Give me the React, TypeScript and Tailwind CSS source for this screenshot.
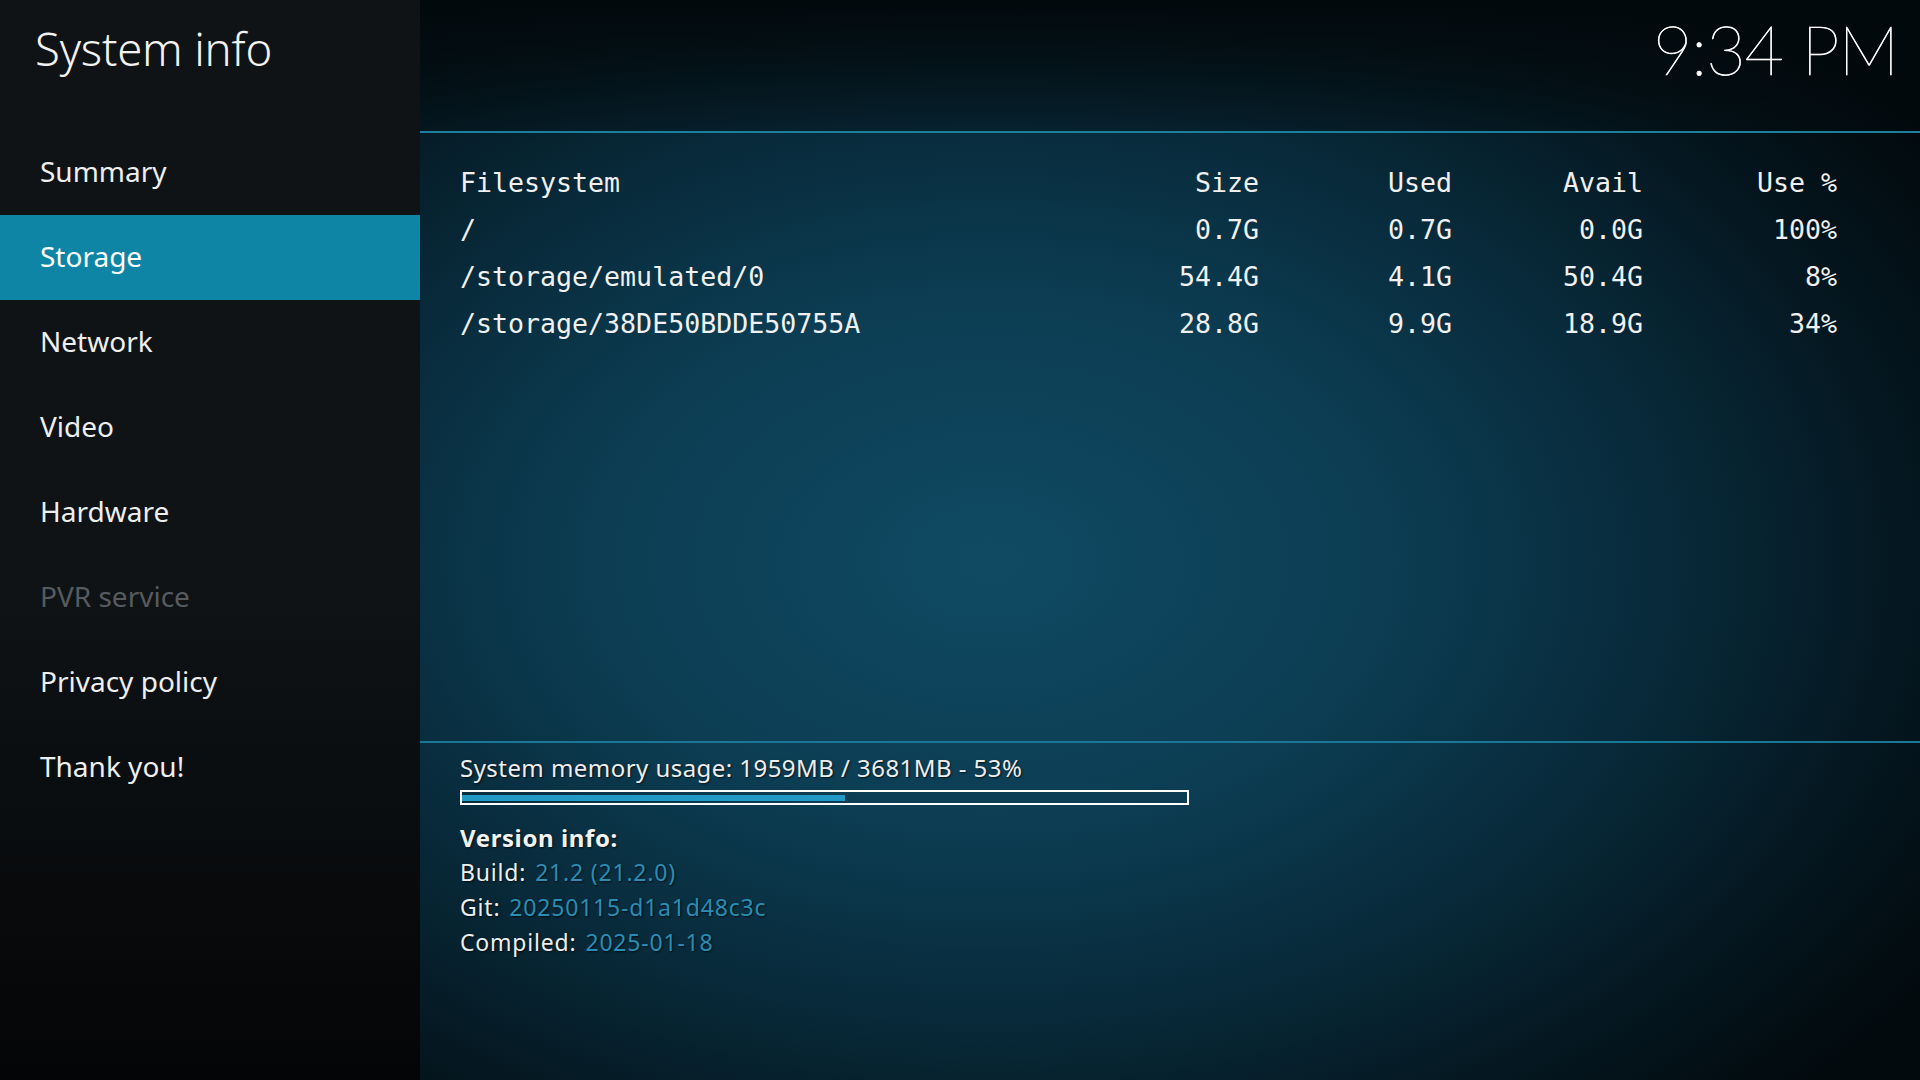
import React from "react";

const menu = [
  { label: "Summary" },
  { label: "Storage", active: true },
  { label: "Network" },
  { label: "Video" },
  { label: "Hardware" },
  { label: "PVR service", disabled: true },
  { label: "Privacy policy" },
  { label: "Thank you!" },
];

const rows = [
  ["Filesystem", "Size", "Used", "Avail", "Use %"],
  ["/", "0.7G", "0.7G", "0.0G", "100%"],
  ["/storage/emulated/0", "54.4G", "4.1G", "50.4G", "8%"],
  ["/storage/38DE50BDDE50755A", "28.8G", "9.9G", "18.9G", "34%"],
];

export default function App() {
  return (
    <div className="flex h-[1080px] w-[1920px] overflow-hidden bg-black text-white [font-family:'Noto_Sans','Open_Sans',sans-serif]">
      {/* Sidebar */}
      <aside className="flex w-[420px] shrink-0 flex-col bg-[linear-gradient(180deg,#101316_0%,#0f1316_55%,#040506_100%)]">
        <div className="flex h-[130px] items-start pl-[35px] pt-[17px]">
          <h1 className="text-[45.5px] font-light leading-[62px] tracking-[-0.2px] text-[#f2f2f2]">System info</h1>
        </div>
        <nav className="flex flex-col">
          {menu.map((m) => (
            <div
              key={m.label}
              className={
                "flex h-[85px] items-center pb-[3px] pl-[40px] text-[28px] " +
                (m.active
                  ? "bg-[#0f85a6] text-white"
                  : m.disabled
                  ? "text-[#565b5f]"
                  : "text-[#eeeeee]")
              }
            >
              {m.label}
            </div>
          ))}
        </nav>
      </aside>

      {/* Main */}
      <main className="flex flex-1 flex-col bg-[radial-gradient(ellipse_75%_70%_at_38%_52%,#0f4a63_0%,#0c3d53_35%,#082a3a_60%,#04141c_85%,#020a0e_100%)]">
        <header className="flex h-[131px] shrink-0 items-start justify-end bg-[linear-gradient(180deg,#02090c_0%,rgba(2,9,12,0.3)_100%)] pr-[22px] pt-[6px]">
          <div className="text-[68px] font-thin leading-[86px] tracking-[-1px] text-white [-webkit-text-stroke:0.7px_#ffffff] [font-family:'Lato','Roboto',sans-serif]">
            9:34 PM
          </div>
        </header>
        <div className="h-[2px] bg-[#1b7f9d]" />

        <section className="flex-1 pl-[40px] pt-[26px] [font-family:'DejaVu_Sans_Mono','Liberation_Mono',monospace] text-[26.6px] text-[#f0f0f0]">
          {rows.map((r, i) => (
            <div key={i} className="grid h-[47.2px] grid-cols-[606px_193px_193px_191px_194px] items-center">
              <div>{r[0]}</div>
              <div className="text-right">{r[1]}</div>
              <div className="text-right">{r[2]}</div>
              <div className="text-right">{r[3]}</div>
              <div className="text-right">{r[4]}</div>
            </div>
          ))}
        </section>

        <div className="h-[2px] bg-[#1a7896]" />
        <section className="h-[337px] shrink-0 pl-[40px] pt-[9px] [text-shadow:1px_1px_2px_rgba(0,0,0,0.7)]">
          <div className="text-[24px] leading-[32px] tracking-[0.45px] text-[#eeeeee]">System memory usage: 1959MB / 3681MB - 53%</div>
          <div className="mt-[6px] flex h-[15px] w-[729px] items-center border-2 border-white px-0">
            <div className="h-[6px] w-[383px] bg-[#2199c4]" />
          </div>
          <div className="mt-[15px] text-[24px] font-bold leading-[35px] tracking-[0.6px] text-[#f2f2f2]">Version info:</div>
          <div className="text-[23px] leading-[35px] tracking-[0.8px] text-[#eeeeee]">
            <div>
              Build:<span className="ml-[9px] text-[#2b8db3]">21.2 (21.2.0)</span>
            </div>
            <div>
              Git:<span className="ml-[9px] text-[#2b8db3]">20250115-d1a1d48c3c</span>
            </div>
            <div>
              Compiled:<span className="ml-[9px] text-[#2b8db3]">2025-01-18</span>
            </div>
          </div>
        </section>
      </main>
    </div>
  );
}
